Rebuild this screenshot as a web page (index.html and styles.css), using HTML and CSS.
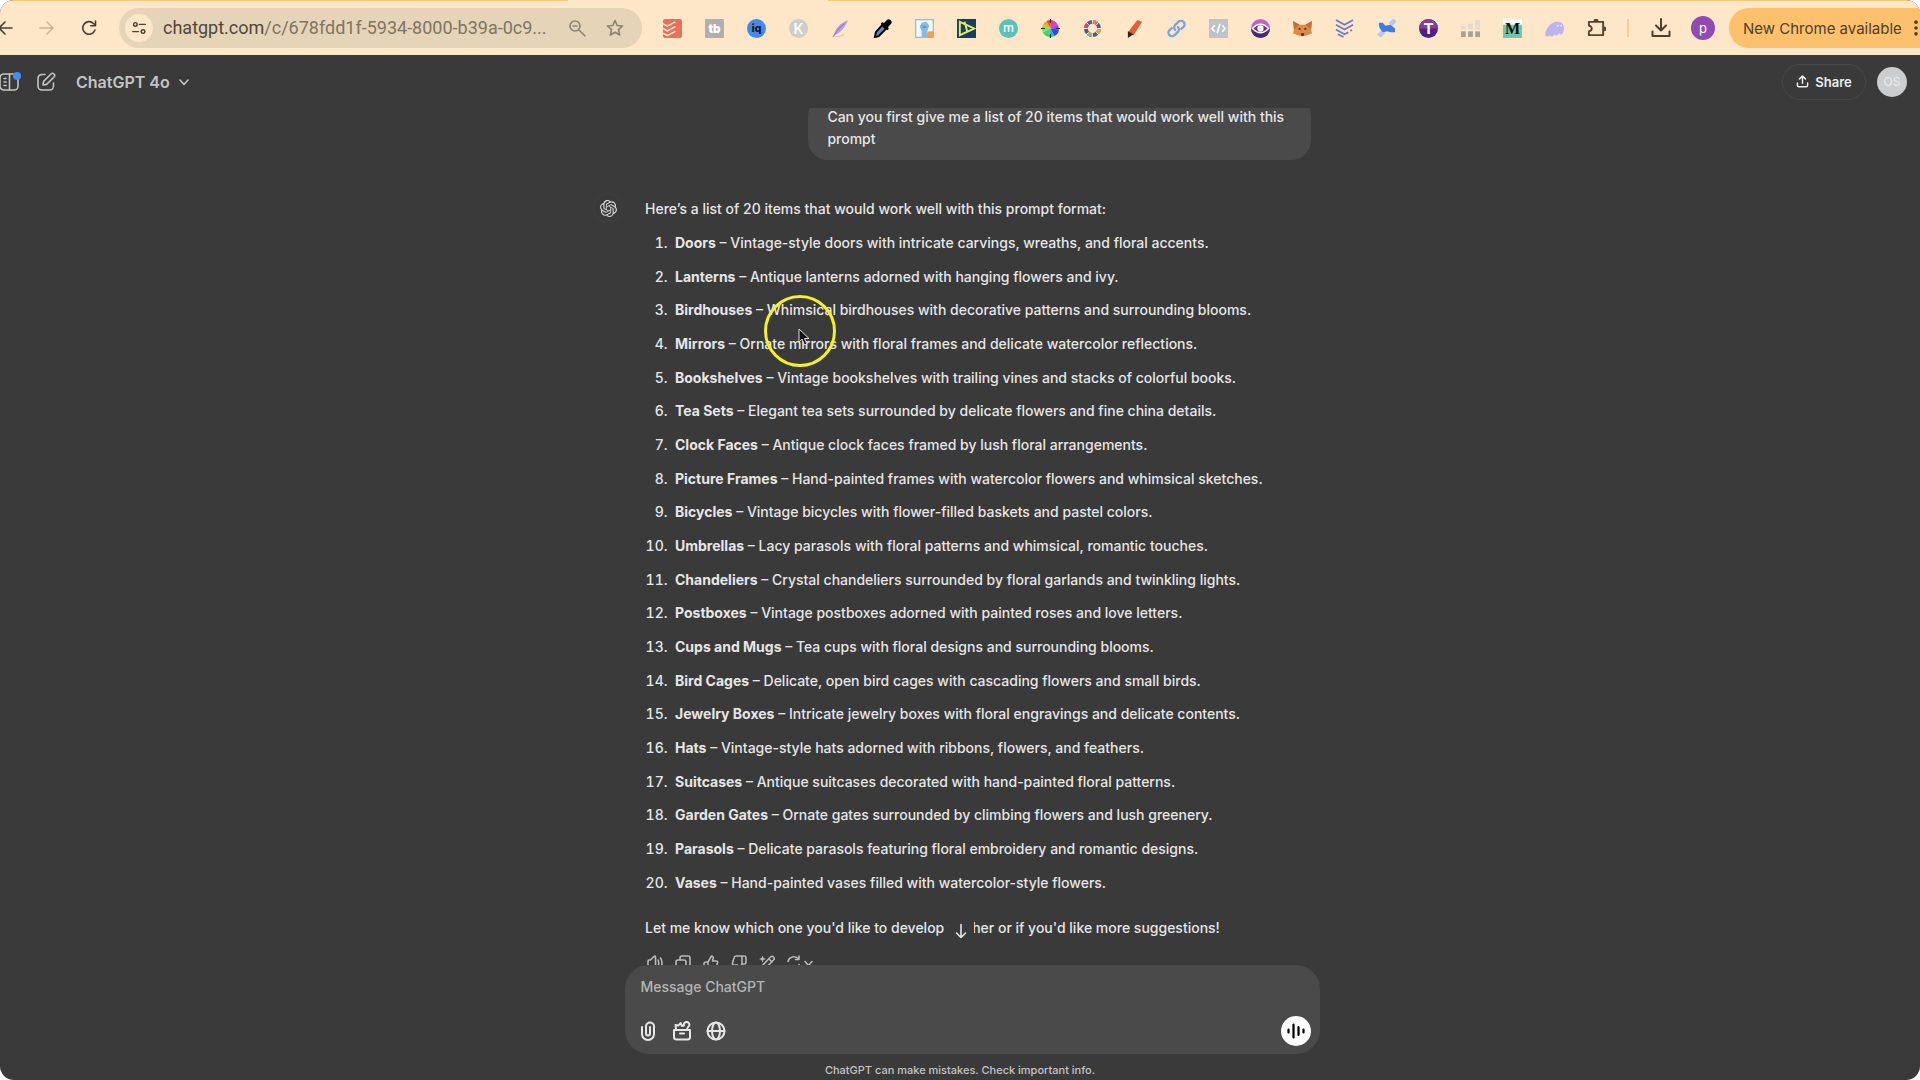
FILE: index.html
```
<!DOCTYPE html>
<html lang="en">
<head>
    <meta charset="UTF-8">
    <meta name="viewport" content="width=device-width, initial-scale=1.0">
    <title>ChatGPT</title>
    <link rel="stylesheet" href="styles.css">
</head>
<body>
    <div class="window">
        <div class="tab-strip"><div class="active-tab"></div></div>
        <div class="toolbar">
            <div class="nav-buttons">
                <button class="icon-btn" aria-label="Back"><svg viewBox="0 0 20 20" class="stroke"><path d="M17 10H4M10 4l-6 6 6 6"/></svg></button>
                <button class="icon-btn faded" aria-label="Forward"><svg viewBox="0 0 20 20" class="stroke"><path d="M3 10h13M10 4l6 6-6 6"/></svg></button>
                <button class="icon-btn" aria-label="Reload"><svg viewBox="0 0 20 20" class="stroke"><path d="M16 12a6.3 6.3 0 1 1-1.5-6.5L16.500 7.500M16.500 3v4.800h-4.800"/></svg></button>
            </div>
            <div class="address">
                <button class="site-info" aria-label="Site information"><svg viewBox="0 0 20 20" class="stroke"><circle cx="6" cy="6" r="2"/><path d="M10.500 6H17M3 14h6.500"/><circle cx="14.500" cy="14" r="2"/></svg></button>
                <div class="url">chatgpt.com<span>/c/678fdd1f-5934-8000-b39a-0c9...</span></div>
                <button class="icon-btn grey" aria-label="Zoom"><svg viewBox="0 0 20 20" class="stroke"><circle cx="8" cy="8" r="5"/><path d="M12 12l6 6M6 8h4"/></svg></button>
                <button class="icon-btn grey" aria-label="Bookmark"><svg viewBox="0 0 20 20" class="stroke"><path d="M10 2.500l2.200 5 5.300.5-4 3.600 1.200 5.400L10 14.200 5.300 17l1.200-5.400-4-3.600 5.300-.5z"/></svg></button>
            </div>
            <div class="extensions">
                <svg viewBox="0 0 20 20"><rect width="20" height="20" rx="2" fill="#e5735a"/><path d="M0 5l4.500 2.500L13 3M0 10l4.500 2.500L13 8M0 15l4.500 2.500L13 13" fill="none" stroke="#fbe3d6" stroke-width="1.600"/></svg>
                <svg viewBox="0 0 20 20"><rect width="20" height="20" rx="1" fill="#b0afb0"/><text x="10" y="14.500" class="glyph" font-size="12" font-weight="900">tb</text></svg>
                <svg viewBox="0 0 20 20"><circle cx="10" cy="10" r="10" fill="#4688ee"/><text x="10" y="14" class="glyph dark" font-size="11" font-weight="800">iq</text></svg>
                <svg viewBox="0 0 20 20"><circle cx="10" cy="10" r="10" fill="#cfcdc8"/><text x="10" y="15.500" class="glyph" font-size="15" font-weight="600">K</text></svg>
                <svg viewBox="0 0 20 20"><path d="M3 18C4 10 9 5 18 1c-3 7-7 13-14 16z" fill="#c39ade"/><path d="M2 19C7 11 10 8 14 5" stroke="#8b64ae" fill="none"/><path d="M5 18.500q5 0 9-2" stroke="#dcc2ad" fill="none"/></svg>
                <svg viewBox="0 0 20 20"><path d="M2 19l1-5 7-8 4 4-8 8z" fill="#6d83c4" stroke="#000" stroke-width="2"/><path d="M10 5l5 5" stroke="#000" stroke-width="3" stroke-linecap="round"/><path d="M13 7l3.500-3.500" stroke="#000" stroke-width="6" stroke-linecap="round"/></svg>
                <svg viewBox="0 0 20 20"><rect x=".7" y=".7" width="18.600" height="18.600" fill="#f4faff" stroke="#8ebfe8" stroke-width="1.400"/><path d="M5 8l2-4 5-1 3 4-2 6 1 6H7v-6z" fill="#82bce9"/><path d="M7 7l5 1M7 9h5" stroke="#5798cf"/><rect x="13" y="13" width="7" height="7" rx="2" fill="#f0a050"/></svg>
                <svg viewBox="0 0 20 20"><rect width="20" height="20" fill="#143f67"/><path d="M3 3l15 7-15 7zM8 3l3 11" fill="none" stroke="#e3ee57" stroke-width="2"/></svg>
                <svg viewBox="0 0 20 20"><circle cx="10" cy="10" r="10" fill="#5cc0bd"/><text x="10" y="14" class="glyph" font-size="13">m</text></svg>
                <svg viewBox="0 0 20 20"><path d="M10 10V1a9 9 0 0 1 7 4z" fill="#e03bb5"/><path d="M10 10l7-5a9 9 0 0 1 2 6z" fill="#9b48e8"/><path d="M10 10l9 1a9 9 0 0 1-5 7z" fill="#2b48e8"/><path d="M10 10l4 8a9 9 0 0 1-6 1z" fill="#24b4dc"/><path d="M10 10L8 19a9 9 0 0 1-6-5z" fill="#3fd46b"/><path d="M10 10l-8 4a9 9 0 0 1 0-8z" fill="#8be055"/><path d="M10 10L2 6a9 9 0 0 1 4-4z" fill="#f5a62a"/><path d="M10 10L6 2a9 9 0 0 1 4-1z" fill="#e8453a"/><path d="M10 0v4M10 16v4M0 10h4M16 10h4" stroke="#222"/></svg>
                <svg viewBox="0 0 20 20" fill="none" stroke-width="4"><circle cx="10" cy="10" r="7" stroke="#4b5b96"/><circle cx="10" cy="10" r="7" stroke="#e3a24b" stroke-dasharray="6 38"/><circle cx="10" cy="10" r="7" stroke="#88b77a" stroke-dasharray="6 38" stroke-dashoffset="-11"/><circle cx="10" cy="10" r="7" stroke="#b05a74" stroke-dasharray="6 38" stroke-dashoffset="-22"/><circle cx="10" cy="10" r="7" stroke="#e57b57" stroke-dasharray="6 38" stroke-dashoffset="-33"/><path d="M10 0v5M10 15v5M0 10h5M15 10h5M3 3l3 3M14 14l3 3M17 3l-3 3M6 14l-3 3" stroke="#fee6c9" stroke-width="1"/></svg>
                <svg viewBox="0 0 20 20"><path d="M13 1l5 2-9 14-6-3z" fill="#e25f38"/><path d="M3 13l6 3-6 4z" fill="#33221b"/></svg>
                <svg viewBox="0 0 20 20" fill="none" stroke="#7fa2dc" stroke-width="2.400" stroke-linecap="round"><path d="M8.500 11.500a3.500 3.500 0 0 1 0-5L12 3a3.800 3.800 0 0 1 5.400 5.400L15 10.500"/><path d="M11.500 8.500a3.500 3.500 0 0 1 0 5L8 17a3.800 3.800 0 0 1-5.400-5.400L5 9.500"/></svg>
                <svg viewBox="0 0 20 20"><rect width="20" height="20" rx="1" fill="#bfc3c9"/><path d="M6 6.500L3 10l3 3.500M14 6.500l3 3.500-3 3.500M11.500 5l-3 10" fill="none" stroke="#fff" stroke-width="1.600"/></svg>
                <svg viewBox="0 0 20 20"><circle cx="10" cy="10" r="10" fill="#c65fcf"/><path d="M0 10a10 10 0 0 0 20 0z" fill="#51256e"/><path d="M1.500 10Q10 1 18.500 10 10 19 1.500 10z" fill="#6d3287" stroke="#fff" stroke-width="1.500"/><circle cx="10" cy="10" r="3.300" fill="#fff"/></svg>
                <svg viewBox="0 0 20 20"><path d="M0 2l7 4h6l7-4-1 9 1 4-5 2-3 1H8l-3-1-5-2 1-4z" fill="#dd8c48"/><path d="M0 2l7 4-6 5zM20 2l-7 4 6 5z" fill="#bd723c"/><path d="M6 10l2 1M14 10l-2 1" stroke="#3d2a22" stroke-width="1.500"/><path d="M8 15h4l-1 3H9z" fill="#4b342a"/></svg>
                <svg viewBox="0 0 20 20" fill="none" stroke="#6a7dc4" stroke-width="1.800"><path d="M1 1l9 5 9-5M1 6l9 5 9-5M1 11l9 5 4-2M3 16l6 3M16 12h2" /></svg>
                <svg viewBox="0 0 20 20"><path d="M14 6l5-5M2 18l5-5" stroke="#b4cbf0" stroke-width="5"/><path d="M2 4l4 0 3 3 5-1 5 4 0 4-5 0-3-1-5 1-3-4-1-3z" fill="#407ae4"/></svg>
                <svg viewBox="0 0 20 20"><circle cx="10" cy="10" r="10" fill="#50247c"/><path d="M0 10a10 10 0 0 1 20 0z" fill="#8a3b9d"/><text x="10" y="16" class="glyph" font-size="16" font-weight="700">T</text></svg>
                <svg viewBox="0 0 20 20"><g fill="#aaa294"><rect y="13" width="5" height="6"/><rect x="7.500" y="13" width="5" height="6"/><rect x="15" y="13" width="5" height="6"/></g><g fill="#e6dacb"><rect y="7" width="5" height="4"/><rect x="7.500" y="5" width="5" height="6"/><rect x="15" y="1" width="5" height="10"/></g></svg>
                <svg viewBox="0 0 20 20"><rect width="20" height="20" fill="#fff"/><rect y="6" width="20" height="14" fill="#75c4ac"/><text x="10" y="16" class="glyph dark serif" font-size="17" font-weight="700">M</text></svg>
                <svg viewBox="0 0 20 20"><path d="M1 18c-2 0 0-12 10-15 8-1 9 4 9 8-1 6-4 6-5 4-2 3-4 3-5 1-2 3-4 3-5 1-1 1-2 2-4 1z" fill="#bdb4ef"/><circle cx="13.500" cy="7" r="1" fill="#eee9ff"/><circle cx="17" cy="7" r="1" fill="#eee9ff"/></svg>
                <svg viewBox="0 0 20 20"><path d="M2 3h15v14H2v-4c4-1 4-5 0-6z" fill="none" stroke="#54432f" stroke-width="2" stroke-linejoin="round"/><path d="M7 2a2.500 2.500 0 0 1 5 0zM18 8a2.500 2.500 0 0 1 0 5z" fill="#54432f"/></svg>
            </div>
            <div class="toolbar-divider"></div>
            <button class="icon-btn download" aria-label="Downloads"><svg viewBox="0 0 20 20" class="stroke bold"><path d="M10 1v11M5 7.500l5 5 5-5M1.500 13.500V18h17v-4.500"/></svg></button>
            <button class="profile" aria-label="Profile">p</button>
            <button class="update">New Chrome available<svg viewBox="0 0 8 20"><circle cx="4" cy="3.500" r="2"/><circle cx="4" cy="10" r="2"/><circle cx="4" cy="16.500" r="2"/></svg></button>
        </div>

        <header class="header">
            <button class="icon-btn sidebar-btn" aria-label="Open sidebar"><svg viewBox="0 0 20 20" class="stroke"><rect x="0" y="2" width="18" height="16" rx="4"/><path d="M9.500 2v16M4 6.500h2M4 10h2M4 13.500h2"/></svg><span class="dot"></span></button>
            <button class="icon-btn" aria-label="New chat"><svg viewBox="0 0 20 20" class="stroke"><path d="M9 2.500H6a4 4 0 0 0-4 4V14a4 4 0 0 0 4 4h7.500a4 4 0 0 0 4-4v-3"/><path d="M7 13l.6-3.600L15 2a1.900 1.900 0 0 1 3 3l-7.400 7.400z"/></svg></button>
            <button class="model">ChatGPT 4o<svg viewBox="0 0 12 12" class="stroke"><path d="M2 4l4 4.500L10 4"/></svg></button>
            <button class="share"><svg viewBox="0 0 14 14" class="stroke"><path d="M7 9V1M3.800 4.200L7 1l3.200 3.200M1.500 8.500V11q0 1.700 1.700 1.700h7.600q1.700 0 1.700-1.700V8.500"/></svg>Share</button>
            <button class="account" aria-label="Account">OS</button>
        </header>

        <main class="chat">
            <div class="thread">
                <div class="user-message">Can you first give me a list of 20 items that would work well with this prompt</div>
                <div class="reply">
                    <div class="logo"><svg viewBox="0 0 24 24"><path d="M22.2819 9.8211a5.9847 5.9847 0 0 0-.5157-4.9108 6.0462 6.0462 0 0 0-6.5098-2.9A6.0651 6.0651 0 0 0 4.9807 4.1818a5.9847 5.9847 0 0 0-3.9977 2.9 6.0462 6.0462 0 0 0 .7427 7.0966 5.98 5.98 0 0 0 .511 4.9107 6.051 6.051 0 0 0 6.5146 2.9001A5.9847 5.9847 0 0 0 13.2599 24a6.0557 6.0557 0 0 0 5.7718-4.2058 5.9894 5.9894 0 0 0 3.9977-2.9001 6.0557 6.0557 0 0 0-.7475-7.0729zm-9.022 12.6081a4.4755 4.4755 0 0 1-2.8764-1.0408l.1419-.0804 4.7783-2.7582a.7948.7948 0 0 0 .3927-.6813v-6.7369l2.02 1.1686a.071.071 0 0 1 .038.052v5.5826a4.504 4.504 0 0 1-4.4945 4.4944zm-9.6607-4.1254a4.4708 4.4708 0 0 1-.5346-3.0137l.142.0852 4.783 2.7582a.7712.7712 0 0 0 .7806 0l5.8428-3.3685v2.3324a.0804.0804 0 0 1-.0332.0615L9.74 19.9502a4.4992 4.4992 0 0 1-6.1408-1.6464zM2.3408 7.8956a4.485 4.485 0 0 1 2.3655-1.9728V11.6a.7664.7664 0 0 0 .3879.6765l5.8144 3.3543-2.0201 1.1685a.0757.0757 0 0 1-.071 0l-4.8303-2.7865A4.504 4.504 0 0 1 2.3408 7.872zm16.5963 3.8558L13.1038 8.364 15.1192 7.2a.0757.0757 0 0 1 .071 0l4.8303 2.7913a4.4944 4.4944 0 0 1-.6765 8.1042v-5.6772a.79.79 0 0 0-.407-.667zm2.0107-3.0231l-.142-.0852-4.7735-2.7818a.7759.7759 0 0 0-.7854 0L9.409 9.2297V6.8974a.0662.0662 0 0 1 .0284-.0615l4.8303-2.7866a4.4992 4.4992 0 0 1 6.6802 4.66zM8.3065 12.863l-2.02-1.1638a.0804.0804 0 0 1-.038-.0567V6.0742a4.4992 4.4992 0 0 1 7.3757-3.4537l-.142.0805L8.704 5.459a.7948.7948 0 0 0-.3927.6813zm1.0976-2.3654l2.602-1.4998 2.6069 1.4998v2.9994l-2.5974 1.4997-2.6067-1.4997Z"/></svg></div>
                    <div class="reply-body">
                        <p>Here’s a list of 20 items that would work well with this prompt format:</p>
                        <ol class="items">
                            <li><strong>Doors</strong> – Vintage-style doors with intricate carvings, wreaths, and floral accents.</li>
                            <li><strong>Lanterns</strong> – Antique lanterns adorned with hanging flowers and ivy.</li>
                            <li><strong>Birdhouses</strong> – Whimsical birdhouses with decorative patterns and surrounding blooms.</li>
                            <li><strong>Mirrors</strong> – Ornate mirrors with floral frames and delicate watercolor reflections.</li>
                            <li><strong>Bookshelves</strong> – Vintage bookshelves with trailing vines and stacks of colorful books.</li>
                            <li><strong>Tea Sets</strong> – Elegant tea sets surrounded by delicate flowers and fine china details.</li>
                            <li><strong>Clock Faces</strong> – Antique clock faces framed by lush floral arrangements.</li>
                            <li><strong>Picture Frames</strong> – Hand-painted frames with watercolor flowers and whimsical sketches.</li>
                            <li><strong>Bicycles</strong> – Vintage bicycles with flower-filled baskets and pastel colors.</li>
                            <li><strong>Umbrellas</strong> – Lacy parasols with floral patterns and whimsical, romantic touches.</li>
                            <li><strong>Chandeliers</strong> – Crystal chandeliers surrounded by floral garlands and twinkling lights.</li>
                            <li><strong>Postboxes</strong> – Vintage postboxes adorned with painted roses and love letters.</li>
                            <li><strong>Cups and Mugs</strong> – Tea cups with floral designs and surrounding blooms.</li>
                            <li><strong>Bird Cages</strong> – Delicate, open bird cages with cascading flowers and small birds.</li>
                            <li><strong>Jewelry Boxes</strong> – Intricate jewelry boxes with floral engravings and delicate contents.</li>
                            <li><strong>Hats</strong> – Vintage-style hats adorned with ribbons, flowers, and feathers.</li>
                            <li><strong>Suitcases</strong> – Antique suitcases decorated with hand-painted floral patterns.</li>
                            <li><strong>Garden Gates</strong> – Ornate gates surrounded by climbing flowers and lush greenery.</li>
                            <li><strong>Parasols</strong> – Delicate parasols featuring floral embroidery and romantic designs.</li>
                            <li><strong>Vases</strong> – Hand-painted vases filled with watercolor-style flowers.</li>
                        </ol>
                        <p>Let me know which one you'd like to develop further or if you'd like more suggestions!</p>
                        <div class="actions">
                            <button aria-label="Read aloud"><svg viewBox="0 0 16 16" class="stroke"><path d="M1 6q0-1 1-1h1.500L7 1.500q1.500-1 1.500.5v12q0 1.500-1.500.5L3.500 11H2q-1 0-1-1zM11 5q1.500 3 0 6M13.500 3q3 5 0 10"/></svg></button>
                            <button aria-label="Copy"><svg viewBox="0 0 16 16" class="stroke"><rect x="1" y="5" width="10" height="10" rx="2"/><path d="M5 5V3q0-2 2-2h6q2 0 2 2v6q0 2-2 2h-2"/></svg></button>
                            <button aria-label="Good response"><svg viewBox="0 0 16 16" class="stroke"><path d="M5 7l3.500-6q2.500.5 1.500 3l-.5 2H13q2 0 1.500 2L13 13q-.5 2-2 2H3q-2 0-2-2V9q0-2 2-2zM5 7v8"/></svg></button>
                            <button aria-label="Bad response"><svg viewBox="0 0 16 16" class="stroke"><path d="M11 9l-3.500 6q-2.500-.5-1.500-3l.5-2H3q-2 0-1.500-2L3 3q.5-2 2-2h8q2 0 2 2v4q0 2-2 2zM11 9V1"/></svg></button>
                            <button aria-label="Edit in canvas"><svg viewBox="0 0 16 16" class="stroke"><path d="M3 11l8.500-9a2 2 0 0 1 3 3L6 14l-4 1zM10 4l3 3"/><path d="M3.500.5l1 2.500L7 4 4.500 5l-1 2.500-1-2.500L0 4l2.500-1z" fill="currentColor" stroke="none"/></svg></button>
                            <button aria-label="Regenerate"><svg viewBox="0 0 16 16" class="stroke"><path d="M1 6.500A6 6 0 0 1 11.500 4M12 1v3.500H8.500M12 9.500A6 6 0 0 1 1.500 12M1 15v-3.500h3.500"/></svg><svg viewBox="0 0 12 12" class="stroke chevron"><path d="M2 4.500l3.500 4L9 4.500"/></svg></button>
                        </div>
                    </div>
                </div>
            </div>
            <button class="scroll-down" aria-label="Scroll to bottom"><svg viewBox="0 0 16 16" class="stroke"><path d="M8 1.500v13M3.500 10L8 14.500l4.500-4.500"/></svg></button>
        </main>

        <div class="composer-area">
            <form class="composer">
                <textarea rows="1" aria-label="Message ChatGPT" placeholder="Message ChatGPT"></textarea>
                <div class="composer-tools">
                    <button type="button" aria-label="Attach"><svg viewBox="0 0 20 20" class="stroke bold"><path d="M4 6v7a6 6 0 0 0 12 0V5.500a4 4 0 0 0-8 0V12.500a2 2 0 0 0 4 0V6"/></svg></button>
                    <button type="button" aria-label="Toolbox"><svg viewBox="0 0 20 20" class="stroke bold"><path d="M2 9h16v7q0 2.500-2.500 2.500h-11Q2 18.500 2 16zM8 12.500h4M4 8.500L3.500 4l3 .5L8.500 2l1.500 3 2-.5M12 4.500a2.700 2.700 0 1 1 4 1.500l-1 2.500"/></svg></button>
                    <button type="button" aria-label="Search the web"><svg viewBox="0 0 20 20" class="stroke bold"><circle cx="10" cy="10" r="8.500"/><ellipse cx="10" cy="10" rx="4" ry="8.500"/><path d="M1.500 10h17"/></svg></button>
                    <button type="button" class="voice" aria-label="Voice mode"><svg viewBox="0 0 20 20"><path d="M2.500 8.500v3M7.500 3.500v13M12.500 6v8M17.500 8.500v3" stroke="#000" stroke-width="2.200" stroke-linecap="round"/></svg></button>
                </div>
            </form>
            <div class="disclaimer">ChatGPT can make mistakes. Check important info.</div>
        </div>

        <div class="click-ring"></div>
        <svg class="cursor" viewBox="0 0 12 18"><path d="M1 1v13l3-3 2.500 6 2.500-1-2.500-5.500H11z" fill="#111" stroke="#ddd"/></svg>
    </div>
</body>
</html>
```
FILE: styles.css
```
* {
    box-sizing: border-box;
}
body {
    margin: 0;
    background: #fff;
    font-family: Inter, Arial, sans-serif;
    font-size: 14px;
    font-weight: 500;
    line-height: 22px;
    color: #e6e6e6;
}
button {
    display: flex;
    align-items: center;
    justify-content: center;
    padding: 0;
    border: 0;
    background: none;
    color: inherit;
    font-family: Inter, sans-serif;
    cursor: pointer;
}
svg {
    display: block;
    flex: none;
}
.stroke {
    fill: none;
    stroke: currentColor;
    stroke-width: 1.6;
    stroke-linecap: round;
    stroke-linejoin: round;
}
.stroke.bold {
    stroke-width: 2;
}
.window {
    position: relative;
    display: flex;
    flex-direction: column;
    height: 100vh;
    overflow: hidden;
    border-radius: 14px;
    background: #3a3a3a;
}

/* Browser toolbar */
.tab-strip {
    flex: none;
    height: 1px;
    background: #f4c981;
}
.active-tab {
    width: 260px;
    height: 1px;
    margin-left: 568px;
    background: #fee6c9;
}
.toolbar {
    display: flex;
    flex: none;
    align-items: center;
    height: 54px;
    background: #fee6c9;
    color: #4c3f30;
}
.icon-btn,
.icon-btn svg {
    width: 20px;
    height: 20px;
}
.nav-buttons {
    display: flex;
    gap: 22px;
    margin: 0 20px 0 -5px;
}
.faded {
    color: #c8b399;
}
.grey {
    color: #8a8273;
}
.address {
    display: flex;
    flex: 1;
    align-items: center;
    gap: 18px;
    min-width: 0;
    height: 40px;
    margin-right: 21px;
    padding: 0 17px 0 6px;
    border-radius: 20px;
    background: #e6d4b8;
}
.site-info {
    width: 28px;
    height: 28px;
    border-radius: 50%;
    background: #fee6c9;
}
.site-info svg {
    width: 18px;
    height: 18px;
}
.url {
    flex: 1;
    overflow: hidden;
    margin-left: -8px;
    font-family: Roboto, sans-serif;
    font-size: 18px;
    font-weight: 400;
    white-space: nowrap;
    color: #51463a;
}
.url span {
    color: #807562;
}
.extensions {
    display: flex;
    gap: 23px;
}
.extensions svg {
    width: 19px;
    height: 19px;
}
.glyph {
    fill: #fff;
    font-family: Inter, sans-serif;
    text-anchor: middle;
}
.glyph.dark {
    fill: #111;
}
.glyph.serif {
    font-family: "Liberation Serif", serif;
}
.toolbar-divider {
    width: 2px;
    height: 18px;
    margin: 0 22px 0 21px;
    background: #f8cd8f;
}
.profile {
    width: 24px;
    height: 24px;
    margin: 0 14px 0 20px;
    border-radius: 50%;
    background: #8e4bb2;
    color: #fff;
    font-size: 13px;
}
.update {
    justify-content: flex-start;
    gap: 10px;
    width: 191px;
    height: 40px;
    padding-left: 14px;
    border-radius: 20px 0 0 20px;
    background: #fdc06d;
    font-size: 15px;
    white-space: nowrap;
}
.update svg {
    width: 8px;
    height: 18px;
    fill: #4c3f30;
}

/* Header */
.header {
    display: flex;
    flex: none;
    align-items: center;
    height: 53px;
    padding-right: 13px;
    color: #c4c4c4;
}
.sidebar-btn {
    position: relative;
    margin-right: 16px;
}
.dot {
    position: absolute;
    top: 0;
    right: -1px;
    width: 8px;
    height: 8px;
    border-radius: 50%;
    background: #3f8ef0;
}
.model {
    gap: 8px;
    margin-left: 20px;
    font-size: 16px;
    font-weight: 600;
}
.model svg {
    width: 12px;
    height: 12px;
}
.share {
    gap: 6px;
    width: 84px;
    height: 36px;
    margin: 0 11px 0 auto;
    border: 1px solid #474747;
    border-radius: 18px;
    font-size: 13px;
    font-weight: 600;
    color: #ececec;
}
.share svg {
    width: 13px;
    height: 13px;
}
.account {
    width: 30px;
    height: 30px;
    border-radius: 50%;
    background: #cbcdce;
    color: #e9ebec;
    font-size: 12px;
}

/* Conversation */
.chat {
    position: relative;
    display: flex;
    flex: 1;
    justify-content: center;
    min-height: 0;
    padding-right: 16px;
    overflow: hidden;
}
.thread {
    display: flex;
    flex: 1;
    flex-direction: column;
    max-width: 718px;
    margin-top: -12px;
}
.user-message {
    align-self: flex-end;
    max-width: 70%;
    padding: 10px 19px;
    border-radius: 20px;
    background: #4a4a4a;
}
.reply {
    display: flex;
    flex: 1;
    gap: 22px;
    padding-top: 38px;
}
.logo {
    display: flex;
    align-items: center;
    justify-content: center;
    width: 30px;
    height: 30px;
    margin-top: -5px;
    border: 1px solid #404040;
    border-radius: 50%;
}
.logo svg {
    width: 17px;
    height: 17px;
    fill: #dcdcdc;
}
.reply-body {
    display: flex;
    flex: 1;
    flex-direction: column;
}
.reply-body p {
    margin: 0;
}
.items {
    display: flex;
    flex: 1;
    flex-direction: column;
    justify-content: space-between;
    margin: 12px 0 23px;
    padding-left: 30px;
}
.items li::marker {
    content: counter(list-item) ".\00a0\00a0";
}
.items strong {
    font-weight: 700;
}
.actions {
    display: flex;
    gap: 12px;
    height: 16px;
    margin: 16px 0 -6px 2px;
    color: #b8b8b8;
}
.actions svg {
    width: 16px;
    height: 16px;
}
.actions .chevron {
    width: 12px;
    height: 12px;
}
.scroll-down {
    position: absolute;
    bottom: 18px;
    left: 50%;
    width: 26px;
    height: 32px;
    margin-left: -12px;
    border-radius: 8px;
    background: #3a3a3a;
}
.scroll-down svg {
    width: 16px;
    height: 16px;
}

/* Composer */
.composer-area {
    flex: none;
    padding-left: 24px;
}
.composer {
    max-width: 695px;
    margin: 0 auto;
    padding: 11px 9px 8px 16px;
    border-radius: 24px;
    background: #4a4a4a;
}
.composer textarea {
    display: block;
    width: 100%;
    height: 22px;
    margin-bottom: 18px;
    padding: 0;
    border: 0;
    outline: 0;
    resize: none;
    background: none;
    color: #ececec;
    font: inherit;
}
.composer textarea::placeholder {
    color: #b4b4b4;
}
.composer-tools {
    display: flex;
    align-items: center;
    gap: 14px;
    margin-left: -3px;
}
.composer-tools svg {
    width: 20px;
    height: 20px;
}
.composer-tools .voice {
    width: 30px;
    height: 30px;
    margin-left: auto;
    border-radius: 50%;
    background: #fff;
}
.disclaimer {
    padding: 8px 24px 2px 0;
    font-size: 11px;
    line-height: 16px;
    text-align: center;
    color: #c4c4c4;
}

/* Pointer highlight */
.click-ring {
    position: absolute;
    top: 295px;
    left: 764px;
    width: 72px;
    height: 72px;
    border: 3px solid #f4f02a;
    border-radius: 50%;
}
.cursor {
    position: absolute;
    top: 328px;
    left: 798px;
    width: 12px;
    height: 18px;
}
```
